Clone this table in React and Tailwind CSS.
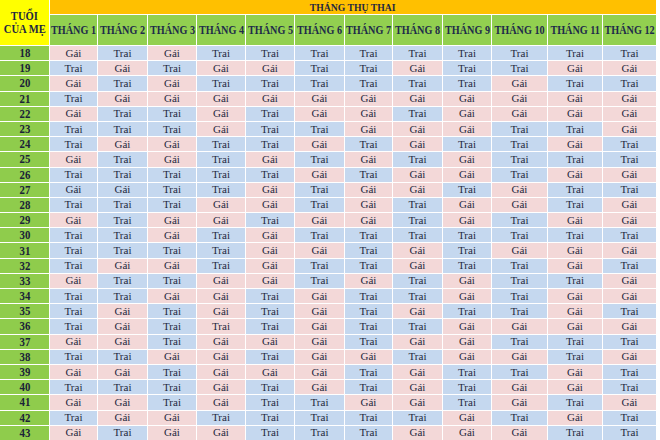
import React from "react";

const rows = [
  [18, "GTGTTTTTTTTT"],
  [19, "TGTGGTTGTTGG"],
  [20, "GTGTTTTTTGTT"],
  [21, "TGGGGGGGGGGG"],
  [22, "GTTGTGGTGGGG"],
  [23, "TTTGTTGGGTTG"],
  [24, "TGGTTGTGTTGT"],
  [25, "GTGTGTGTGTTT"],
  [26, "TTTTTGTGGTGG"],
  [27, "GGTTGTGGTGTT"],
  [28, "TTTGGTGTGGTG"],
  [29, "GTGGTGGTGTGG"],
  [30, "TTGTGTTTTTTT"],
  [31, "TTTTGGTGTGGG"],
  [32, "TGGTGTTGTTGT"],
  [33, "GTTGGTGTGTTG"],
  [34, "TTGGTGTTGTGG"],
  [35, "TGTGTGTGTTGT"],
  [36, "TGTTTGTTGGGG"],
  [37, "GGTGGGTGGTTT"],
  [38, "TTGGTGGTGGTG"],
  [39, "GGTGGGTGTTGT"],
  [40, "TTTGTGTGTGGT"],
  [41, "GGTGTTGGTGTG"],
  [42, "TGGTTTTTGTGT"],
  [43, "GTGGTTTGGGTT"],
];

const bgOverride = {
  "27-0": "T",
  "27-1": "T",
  "36-3": "G",
};

const months = Array.from({ length: 12 }, (_, i) => `THÁNG ${i + 1}`);

export default function App() {
  return (
    <div className="w-[660px] h-[440px] overflow-hidden bg-white font-['Liberation_Serif',serif]">
      <div className="grid gap-px bg-white grid-cols-[49px_47px_49px_48px_48px_48px_49px_47px_49px_48px_55px_54px_53px] grid-rows-[14px_30px_repeat(26,14.2px)]">
        <div className="row-span-2 bg-[#ffff00] flex flex-col items-center justify-center text-[12px] font-bold leading-[13px] text-[#1e2740]">
          <span className="inline-block scale-x-[0.88] whitespace-nowrap">TUỔI</span>
          <span className="inline-block scale-x-[0.88] whitespace-nowrap">CỦA MẸ</span>
        </div>
        <div className="col-span-12 bg-[#ffc000] flex items-center justify-center text-[11px] font-bold text-[#1e2740] leading-none">
          <span className="inline-block scale-x-[0.88] whitespace-nowrap">THÁNG THỤ THAI</span>
        </div>
        {months.map((m) => (
          <div
            key={m}
            className="bg-[#92d050] flex items-center justify-center text-[12px] font-bold text-[#1e2b4a] leading-none"
          >
            <span className="inline-block scale-x-[0.85] whitespace-nowrap">{m}</span>
          </div>
        ))}
        {rows.map(([age, vals]) => (
          <React.Fragment key={age}>
            <div className="bg-[#8fcc4c] flex items-center justify-center text-[12px] font-bold text-[#1a2238] leading-none">
              <span className="inline-block scale-x-[0.9]">{age}</span>
            </div>
            {vals.split("").map((v, i) => {
              const bg = bgOverride[`${age}-${i}`] || v;
              return (
                <div
                  key={i}
                  className={`flex items-center justify-center text-[11px] leading-none text-[#1f2840] ${
                    bg === "T" ? "bg-[#c5d8ef]" : "bg-[#f3d8d8]"
                  }`}
                >
                  {v === "T" ? "Trai" : "Gái"}
                </div>
              );
            })}
          </React.Fragment>
        ))}
      </div>
    </div>
  );
}
